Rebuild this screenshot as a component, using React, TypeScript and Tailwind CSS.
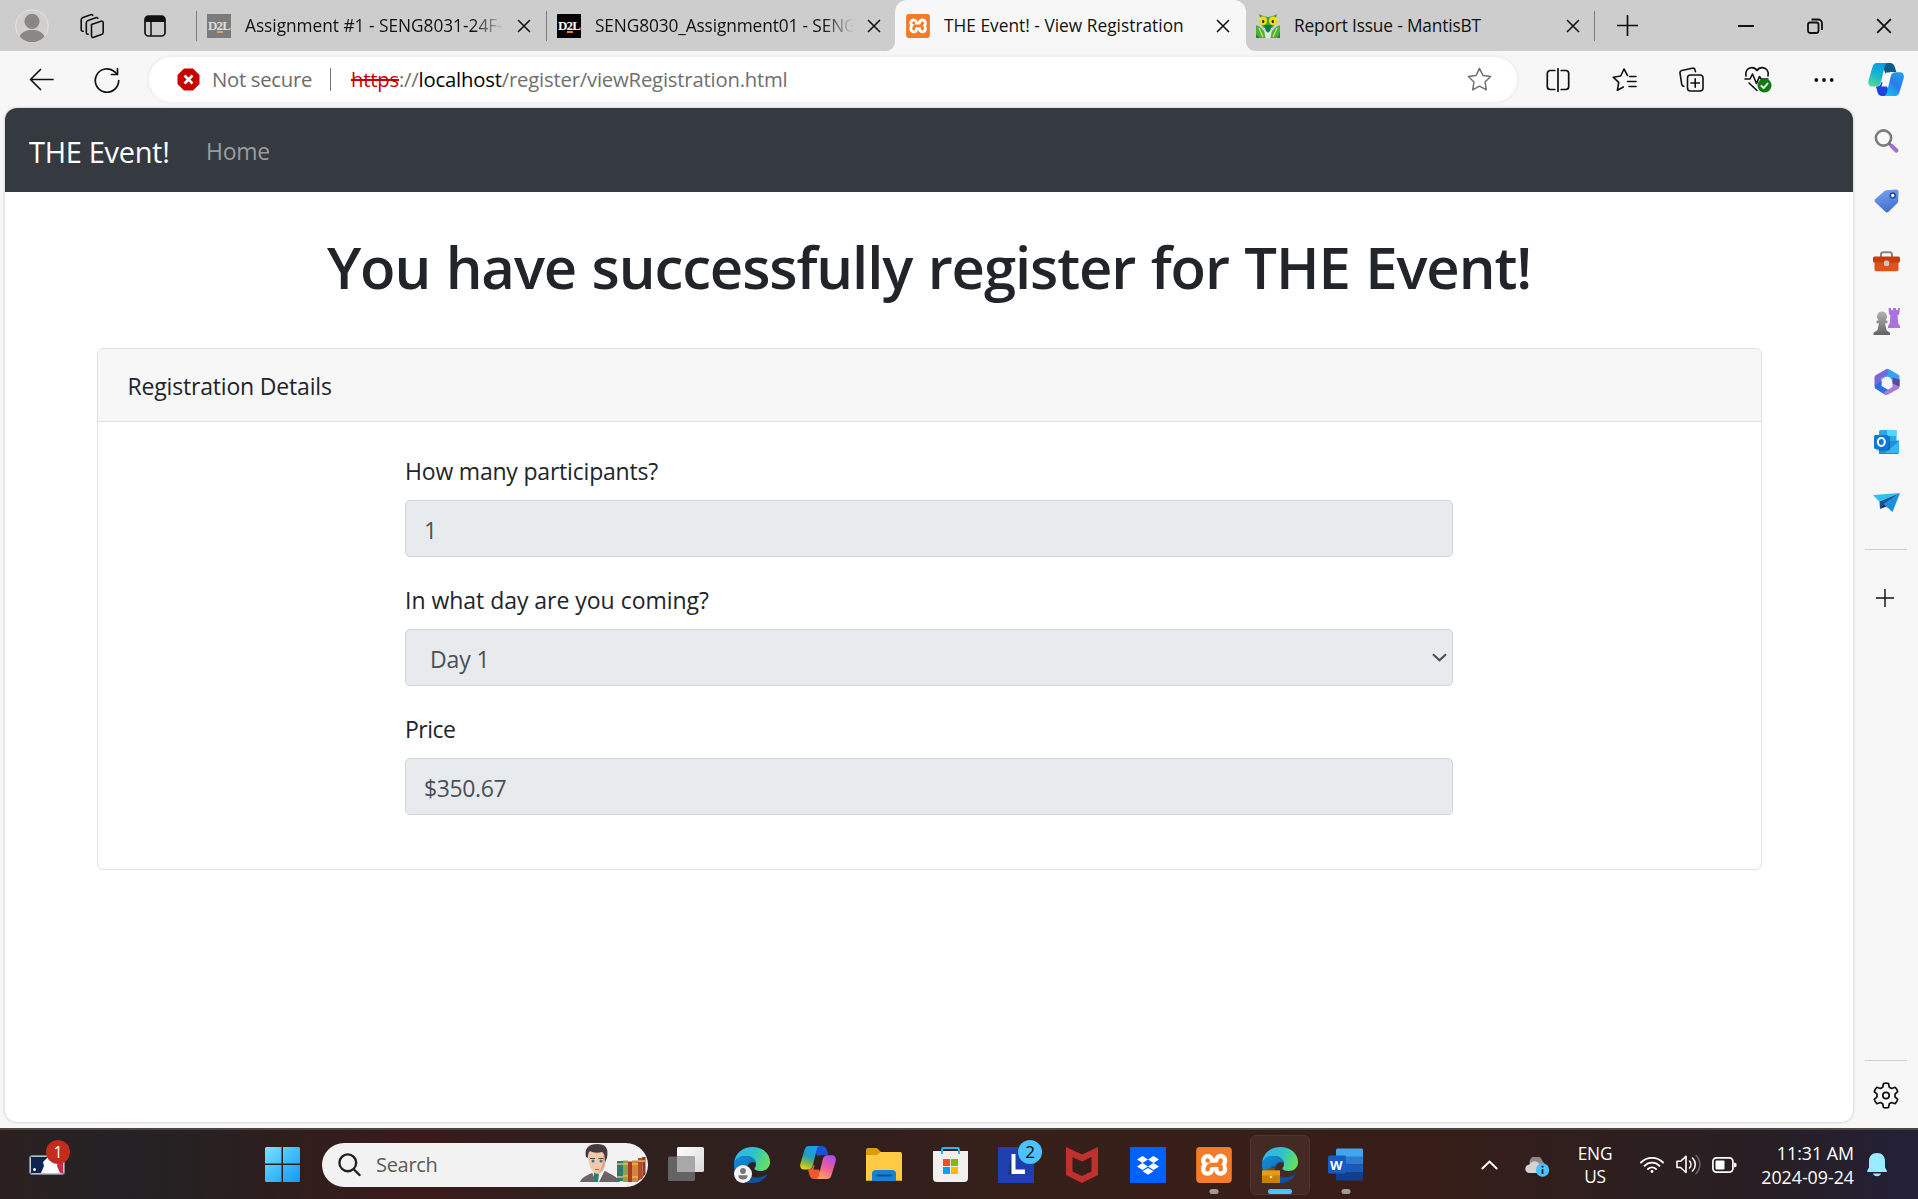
import React from 'react';
import { SiXampp } from 'react-icons/si';

type Kids = { children?: React.ReactNode; className?: string };

/* ---------- small shared glyphs ---------- */

function Cross({ size = 14 }: { size?: number }) {
  return (
    <svg width={size} height={size} viewBox="0 0 14 14" fill="none" stroke="#111" strokeWidth="1.6">
      <path d="M1 1l12 12M13 1L1 13" />
    </svg>
  );
}

function PlusGlyph({ size }: { size: number }) {
  return (
    <svg width={size} height={size} viewBox="0 0 20 20" fill="none" stroke="#111" strokeWidth="1.6">
      <path d="M10 0v20M0 10h20" />
    </svg>
  );
}

function XamppLogo({ size }: { size: number }) {
  return (
    <span className="relative flex shrink-0 items-center justify-center">
      <span className="absolute inset-[3px] bg-white" />
      <SiXampp size={size} className="relative text-[#f47b27]" />
    </span>
  );
}

function D2L({ dim }: { dim?: boolean }) {
  return (
    <span
      className={
        dim
          ? 'relative flex size-6 shrink-0 items-center justify-center bg-[#7b7b7b] text-[#dedede]'
          : 'relative flex size-6 shrink-0 items-center justify-center bg-black text-white'
      }
    >
      <span className="font-['Liberation_Serif',serif] text-[13px] leading-none font-bold tracking-[-0.9px]">D2L</span>
      <span className={dim ? 'absolute top-[17px] left-[10px] h-[2px] w-[6px] bg-[#d9a070]' : 'absolute top-[17px] left-[10px] h-[2px] w-[6px] bg-[#f58220]'} />
    </span>
  );
}

function MantisIcon() {
  return (
    <svg width="24" height="24" viewBox="0 0 24 24" className="shrink-0">
      <path d="M3 0l4 2 5 1 5-1 4-2-1 4v5l-4 5H8L4 9V4z" fill="#3fa535" />
      <path d="M8 11h8l-2 6-2 2-2-2z" fill="#127a44" />
      <path d="M0 11l4 2 6 6v5H0z" fill="#4bb034" />
      <path d="M24 11l-4 2-6 6v5h10z" fill="#4bb034" />
      <path d="M3 14l4 9M21 14l-4 9" stroke="#b9e384" strokeWidth="1.400" />
      <path d="M8 16l4 3 4-3-1.500 8h-5z" fill="#dfe8d8" />
      <path d="M0 20l4 4H0zM24 18l-3 6h3z" fill="#168a4c" />
      <ellipse cx="7" cy="6.800" rx="4" ry="4.200" fill="#f2dc16" />
      <ellipse cx="17" cy="6.800" rx="4" ry="4.200" fill="#f2dc16" />
      <ellipse cx="7.200" cy="7.500" rx="1.200" ry="1.800" fill="#3c2a00" />
      <ellipse cx="16.800" cy="7.500" rx="1.200" ry="1.800" fill="#3c2a00" />
    </svg>
  );
}

/* ---------- tab strip ---------- */

function Tab({ icon, title, fade, active, tracking }: { icon: React.ReactNode; title: string; fade?: boolean; active?: boolean; tracking: string }) {
  return (
    <div
      className={
        active
          ? 'relative flex h-full w-[351px] shrink-0 items-center rounded-t-[12px] bg-[#f7f7f7] pl-[11px]'
          : 'relative flex h-full w-[350px] shrink-0 items-center pl-[10px]'
      }
    >
      {active && (
        <>
          <svg width="9" height="9" viewBox="0 0 9 9" className="absolute bottom-0 -left-[9px]">
            <path d="M9 0v9H0a9 9 0 0 0 9-9z" fill="#f7f7f7" />
          </svg>
          <svg width="9" height="9" viewBox="0 0 9 9" className="absolute -right-[9px] bottom-0">
            <path d="M0 0v9h9a9 9 0 0 1-9-9z" fill="#f7f7f7" />
          </svg>
        </>
      )}
      {icon}
      <span
        className={`ml-[14px] min-w-0 flex-1 overflow-hidden text-[17.3px] leading-[26px] whitespace-nowrap text-[#111] ${tracking} ${
          fade ? '[mask-image:linear-gradient(to_right,black_88%,transparent_100%)]' : ''
        }`}
      >
        {title}
      </span>
      <span className="flex w-[43px] justify-center pr-[4px]">
        <Cross />
      </span>
    </div>
  );
}

function TabStrip() {
  return (
    <div className="flex h-[51px] shrink-0 items-center bg-[#cdcdcd]">
      <div className="flex w-[196px] shrink-0 items-center pl-[15px]">
        <svg width="34" height="34" viewBox="0 0 34 34">
          <circle cx="17" cy="17" r="16.4" fill="#d2d0ce" stroke="#e6e4e2" strokeWidth="1" />
          <circle cx="17" cy="12.3" r="7.6" fill="#8a8785" />
          <path d="M4.5 27.5c2.500-5 7-6.500 12.500-6.500s10 1.500 12.500 6.500A16.300 16.300 0 0 1 17 33.300 16.300 16.300 0 0 1 4.500 27.500z" fill="#8a8785" />
        </svg>
        <svg width="26" height="26" viewBox="0 0 26 26" fill="none" stroke="#111" strokeWidth="1.600" strokeLinejoin="round" strokeLinecap="round" className="ml-[30px]">
          <path d="M12.500 11.500l9.500-3.300c1.200-.4 2.200.2 2.200 1.500v9.500c0 1.200-.6 2-1.800 2.400l-7.600 2.700c-1.300.5-2.300-.1-2.300-1.500z" />
          <path d="M9.200 21.200c-1.100.2-1.900-.4-1.900-1.600V9.800c0-1.200.6-2 1.800-2.400l7.700-2.700c.9-.3 1.700-.1 2.100.6" />
          <path d="M4.200 18.200c-1.200.2-2-.4-2-1.600V6.800c0-1.200.6-2 1.800-2.400l7.700-2.700c.9-.3 1.700-.1 2.100.6" />
        </svg>
        <svg width="22" height="22" viewBox="0 0 22 22" className="ml-[39px]">
          <rect x="1" y="1" width="20" height="20" rx="3.500" fill="none" stroke="#111" strokeWidth="1.700" />
          <path d="M1 7V4.500A3.500 3.500 0 0 1 4.500 1h13A3.500 3.500 0 0 1 21 4.500V7z" fill="#111" />
          <path d="M7 7v14" stroke="#111" strokeWidth="1.500" />
        </svg>
      </div>
      <div className="h-[30px] w-[1px] shrink-0 bg-[#7d7d7d]" />
      <Tab icon={<D2L dim />} title="Assignment #1 - SENG8031-24F-" fade tracking="tracking-[-0.02px]" />
      <div className="-ml-[1px] h-[30px] w-[1px] shrink-0 bg-[#7d7d7d]" />
      <Tab icon={<D2L />} title="SENG8030_Assignment01 - SENG" fade tracking="tracking-[-0.12px]" />
      <div className="-ml-[2px] h-full">
        <Tab icon={<XamppLogo size={24} />} title="THE Event! - View Registration" active tracking="tracking-[0.02px]" />
      </div>
      <Tab icon={<MantisIcon />} title="Report Issue - MantisBT" tracking="tracking-[-0.15px]" />
      <div className="-ml-[2px] h-[30px] w-[1px] shrink-0 bg-[#7d7d7d]" />
      <div className="flex flex-1 items-center">
        <span className="ml-[22px]">
          <PlusGlyph size={21} />
        </span>
        <span className="flex-1" />
        <span className="flex w-[68px] justify-center">
          <span className="h-[2px] w-[16px] bg-[#111]" />
        </span>
        <span className="flex w-[70px] justify-center">
          <svg width="16" height="16" viewBox="0 0 16 16" fill="none" stroke="#111" strokeWidth="1.800">
            <rect x="1" y="4.500" width="10.500" height="10.500" rx="2.200" />
            <path d="M4.500 1.500h6.500a4 4 0 0 1 4 4V12" />
          </svg>
        </span>
        <span className="flex w-[68px] justify-center">
          <Cross size={16} />
        </span>
      </div>
    </div>
  );
}

/* ---------- toolbar ---------- */

function ToolSlot({ children, className = '' }: Kids) {
  return <span className={`flex shrink-0 items-center justify-center ${className}`}>{children}</span>;
}

function Toolbar() {
  return (
    <div className="flex h-[57px] shrink-0 items-center bg-[#f7f7f7]">
      <ToolSlot className="w-[82px]">
        <svg width="25" height="23" viewBox="0 0 25 23" fill="none" stroke="#111" strokeWidth="1.700" strokeLinecap="round" strokeLinejoin="round">
          <path d="M24 11.500H1.500M11.500 1.500l-10 10 10 10" />
        </svg>
      </ToolSlot>
      <ToolSlot className="w-[50px]">
        <svg width="26" height="26" viewBox="0 0 26 26" fill="none" stroke="#111" strokeWidth="1.700" strokeLinecap="round" strokeLinejoin="round">
          <path d="M24.700 13.500A11.700 11.700 0 1 1 20.800 4.800L23 7" />
          <path d="M23.500 1.500v6h-6" />
        </svg>
      </ToolSlot>
      <div className="ml-[17px] flex h-[45px] w-[1368px] shrink-0 items-center rounded-full bg-white pl-[28px] shadow-[0_0_4px_rgba(0,0,0,0.08)]">
        <svg width="23" height="23" viewBox="0 0 23 23">
          <path d="M7 .5h9L22.500 7v9L16 22.500H7L.5 16V7z" fill="#c80000" />
          <path d="M7.500 7.500l8 8M15.500 7.500l-8 8" stroke="#fff" strokeWidth="2.600" />
        </svg>
        <span className="ml-[12px] w-[105px] text-[20.3px] tracking-[-0.28px] whitespace-nowrap text-[#6b6b6b]">Not secure</span>
        <span className="ml-[13px] h-[23px] w-[1px] bg-[#767676]" />
        <span className="ml-[20px] flex-1 text-[20.3px] tracking-[-0.2px] whitespace-nowrap text-[#6f6f6f]">
          <span className="text-[#c80000] line-through decoration-2">https</span>://<span className="text-black">localhost</span>/register/viewRegistration.html
        </span>
        <svg width="25" height="25" viewBox="0 0 24 24" fill="none" stroke="#6f6f6f" strokeWidth="1.400" strokeLinejoin="round" className="mr-[25px]">
          <path d="M12 1.300l3.300 6.800 7.400 1.100-5.400 5.200 1.300 7.500L12 18.400l-6.600 3.500 1.300-7.500L1.300 9.200l7.400-1.100z" />
        </svg>
      </div>
      <ToolSlot className="ml-[8px] w-[66px]">
        <svg width="24" height="24" viewBox="0 0 24 24" fill="none" stroke="#111" strokeWidth="1.700" strokeLinecap="round">
          <path d="M12 .8v22.400M8.800 2.500H4.300a3 3 0 0 0-3 3v13a3 3 0 0 0 3 3h4.500M15.200 2.500h4.500a3 3 0 0 1 3 3v13a3 3 0 0 1-3 3h-4.500" />
        </svg>
      </ToolSlot>
      <ToolSlot className="w-[67px]">
        <svg width="25" height="24" viewBox="0 0 25 24" fill="none" stroke="#111" strokeWidth="1.600" strokeLinecap="round" strokeLinejoin="round">
          <path d="M15.500 7.500L12 1 8.700 8 1.200 9.200l5.500 5.200-1.300 7.900 6-3.300M17.500 8.500h6.500M15.500 13.500h8.500M17 18.500h7" />
        </svg>
      </ToolSlot>
      <ToolSlot className="w-[66px]">
        <svg width="25" height="25" viewBox="0 0 25 25" fill="none" stroke="#111" strokeWidth="1.600" strokeLinecap="round" strokeLinejoin="round">
          <rect x="8.500" y="8" width="15.500" height="16" rx="3" />
          <path d="M16.200 11.800v8.400M12 16h8.400M5 19.200c-1.300 0-2-.8-2.300-2L1 6.200C.8 4.800 1.500 3.800 2.800 3.500l10.500-2.300c1.400-.3 2.500.4 2.700 1.700l.4 1.800" />
        </svg>
      </ToolSlot>
      <ToolSlot className="w-[67px]">
        <svg width="28" height="27" viewBox="0 0 28 27" fill="none" stroke="#111" strokeWidth="1.600" strokeLinecap="round" strokeLinejoin="round">
          <path d="M2 10C1 6 3 2 7.500 1.600c2.500-.1 4.300 1 5.500 2.900 1.200-1.900 3-3 5.500-2.900C23 2 25 6 24 10M1 13h5l2.500-5 4 9.500 3-7L17 13h7M5 17l8 7.500" />
          <circle cx="20.500" cy="19.500" r="7" fill="#107c10" stroke="none" />
          <path d="M17.300 19.800l2.300 2.300 4-4.600" stroke="#fff" strokeWidth="1.800" />
        </svg>
      </ToolSlot>
      <ToolSlot className="w-[65px]">
        <svg width="20" height="6" viewBox="0 0 20 6" fill="#111">
          <circle cx="2.300" cy="3" r="1.900" />
          <circle cx="10" cy="3" r="1.900" />
          <circle cx="17.700" cy="3" r="1.900" />
        </svg>
      </ToolSlot>
      <ToolSlot className="w-[60px]">
        <CopilotBlue />
      </ToolSlot>
    </div>
  );
}

function CopilotBlue() {
  return (
    <svg width="36" height="33" viewBox="0 0 36 33">
      <defs>
        <linearGradient id="cb1" x1="0.6" y1="0" x2="0.2" y2="1">
          <stop offset="0" stopColor="#0d9ce4" />
          <stop offset="0.5" stopColor="#17b5d0" />
          <stop offset="1" stopColor="#54dd8c" />
        </linearGradient>
        <linearGradient id="cb2" x1="0.9" y1="0" x2="0.2" y2="1">
          <stop offset="0" stopColor="#1fa2f0" />
          <stop offset="0.5" stopColor="#2b7bea" />
          <stop offset="1" stopColor="#17c3f8" />
        </linearGradient>
      </defs>
      <path d="M13 0h9c3 0 4 1.500 5 4.500L28.300 9H24c-3 0-4.500 2-5.200 4.500z" fill="#0a5c8c" />
      <path d="M23 33h-8.500c-3 0-4.300-1.500-5.200-4.500L8 23.500c3.500 0 4.600-1.500 5.500-4.500l4 1z" fill="#1a44dd" />
      <path d="M9 0h11c-2 0-3 2-3.500 4L13 19c-.8 3-2.500 4.500-5.500 4.500H4C.5 23.500-.5 20.500.6 17L4.500 4C5.300 1.500 6.500 0 9 0z" fill="url(#cb1)" />
      <path d="M27 33H15.500c2 0 3-2 3.500-4l3.700-15.500C23.400 10.500 25 9.200 28 9.200h4c3.600 0 4.500 3.300 3.500 6.800L31.500 29c-.8 2.500-2 4-4.500 4z" fill="url(#cb2)" />
      <path d="M18.200 9.500h5.500l-1.500 3.500-3.200 10.500h-5.500L15 18z" fill="#f7f7f7" />
    </svg>
  );
}

/* ---------- web page ---------- */

function Field({ label, value, tracking, labelTracking, select }: { label: string; value: string; tracking: string; labelTracking: string; select?: boolean }) {
  return (
    <div className="mb-6">
      <div className={`h-9 pt-[1px] text-[23px] leading-9 text-[#212529] ${labelTracking}`}>{label}</div>
      <div
        className={`mt-3 flex h-[57px] items-center justify-between rounded-[5px] border border-[#ced4da] bg-[#e8ebee] pt-[3px] pr-[5px] text-[23px] text-[#495057] ${
          select ? 'pl-[24px]' : 'pl-[18px]'
        }`}
      >
        <span className={tracking}>{value}</span>
        {select && (
          <svg width="15" height="9" viewBox="0 0 15 9" fill="none" stroke="#495057" strokeWidth="2.200" className="mb-[3px]">
            <path d="M1 1.200l6.500 6 6.500-6" />
          </svg>
        )}
      </div>
    </div>
  );
}

function WebPage() {
  return (
    <div className="mb-[6px] ml-[5px] flex w-[1848px] flex-col overflow-hidden rounded-[12px] bg-white shadow-[0_0_3px_rgba(0,0,0,0.25)]">
      <div className="flex h-[84px] shrink-0 items-center bg-[#343a40] pt-[3px] pl-[24px]">
        <span className="w-[177px] text-[29px] tracking-[-0.32px] text-white">THE Event!</span>
        <span className="text-[23px] tracking-[-0.3px] text-[#999c9f]">Home</span>
      </div>
      <h1 className="mt-[39px] text-center text-[58px] leading-[72px] font-semibold tracking-[-1.1px] text-[#212529] [word-spacing:1.5px]">You have successfully register for THE Event!</h1>
      <div className="mx-auto mt-[45px] h-[522px] w-[1665px] rounded-[6px] border border-[#dfdfdf]">
        <div className="flex h-[73px] items-center rounded-t-[5px] border-b border-[#dfdfdf] bg-[#f7f7f7] pt-[3px] pl-[30px] text-[23px] tracking-[-0.18px] text-[#212529]">
          Registration Details
        </div>
        <div className="mx-auto w-[1048px] pt-[30px]">
          <Field label="How many participants?" value="1" labelTracking="tracking-[-0.2px]" tracking="" />
          <Field label="In what day are you coming?" value="Day 1" labelTracking="tracking-[-0.03px]" tracking="tracking-[-0.1px]" select />
          <Field label="Price" value="$350.67" labelTracking="tracking-[-0.5px]" tracking="tracking-[-0.4px]" />
        </div>
      </div>
    </div>
  );
}

/* ---------- Edge sidebar ---------- */

function Slot({ children }: Kids) {
  return <div className="flex h-[60.2px] items-center justify-center pl-[2px]">{children}</div>;
}

function Sidebar() {
  return (
    <div className="flex w-[65px] flex-col items-center">
      <div className="mt-[3px]">
        <Slot>
          <svg width="25" height="24" viewBox="0 0 25 24" fill="none">
            <circle cx="9.500" cy="9" r="7.600" stroke="#7b7b7b" strokeWidth="2.600" fill="#fafafa" />
            <path d="M15 14.500l3 3" stroke="#6a6a6a" strokeWidth="2.500" />
            <path d="M17.800 17l4.500 4.500" stroke="#a070d2" strokeWidth="4.200" strokeLinecap="round" />
          </svg>
        </Slot>
        <Slot>
          <svg width="25" height="24" viewBox="0 0 25 24">
            <defs>
              <linearGradient id="tag" x1="0" y1="0" x2="0.3" y2="1">
                <stop stopColor="#7aa5f4" />
                <stop offset="1" stopColor="#4571d3" />
              </linearGradient>
            </defs>
            <path d="M12.500 1.200L22 .5c1.500-.1 2.500.8 2.500 2.200l-.3 9.500c0 .8-.3 1.400-.9 2l-8.500 8.300c-1.200 1.200-2.500 1.200-3.700 0L1.300 13.300c-1-1-1-2.200 0-3.200l9.200-8c.6-.5 1.200-.8 2-.9z" fill="url(#tag)" />
            <circle cx="18.700" cy="6.500" r="2.400" fill="#fff" stroke="#24469b" strokeWidth="1.500" />
          </svg>
        </Slot>
        <Slot>
          <svg width="27" height="21" viewBox="0 0 27 21">
            <path d="M8 6V3.500C8 2 9 1.200 10.500 1.200h6C18 1.200 19 2 19 3.500V6" fill="none" stroke="#868686" strokeWidth="2" />
            <path d="M1.500 9h24v9.500c0 1-.7 1.700-1.700 1.700H3.200c-1 0-1.700-.7-1.700-1.700z" fill="#e0521c" />
            <rect x="0" y="5.500" width="27" height="6" rx="1.500" fill="#c83c0c" />
            <rect x="11" y="9.500" width="5" height="5.500" rx="1.500" fill="#c9c9c9" />
          </svg>
        </Slot>
        <Slot>
          <svg width="27" height="28" viewBox="0 0 27 28">
            <defs>
              <linearGradient id="pawn" x1="0" y1="0" x2="0" y2="1">
                <stop stopColor="#b4b4b4" />
                <stop offset="1" stopColor="#636363" />
              </linearGradient>
            </defs>
            <path d="M15.500 0h2.500v2h2V0h3v2h2V0H27l-.7 6-1.800 1.500.7 8L27 18v2H15v-2l1.700-2.500.7-8L16 6z" fill="#a873dc" />
            <path d="M9 3.500a5 5 0 0 1 3.300 8.700l2.200.5v2.500h-2.500l1.500 7 3.500 2.500v2.300H.5v-2.300L4.500 22 6 15.200H3.500v-2.500l2.200-.5A5 5 0 0 1 9 3.500z" fill="url(#pawn)" />
          </svg>
        </Slot>
        <Slot>
          <svg width="26" height="27" viewBox="0 0 26 27">
            <path d="M12 1.200a3 3 0 0 1 3 0l9 5.200c1 .6 1.500 1.500 1.500 2.600v8l-7-4.500-6-3.500-5 3z" fill="#32a4f2" />
            <path d="M12.500 1L2 7C1 7.600.5 8.500.5 9.500v9c0 1 .5 1.800 1.400 2.400L7.500 17V10l7-4c0-3-1-4.500-2-5z" fill="#7b66d7" />
            <path d="M.8 17.500l6.700-4.500v5l7 4 4 1-5.500 3.500a2.500 2.500 0 0 1-2.300 0L2 21z" fill="#2a6fda" />
            <path d="M25.500 11v7.500c0 1-.5 2-1.400 2.500L14 26.500c-2 .8-4-.5-4-2.500l8.500-5v-8z" fill="#a67bd9" />
            <path d="M18.500 9.500l7 2v7l-7-3z" fill="#5a4a9c" />
            <circle cx="13" cy="13.500" r="4.800" fill="#f7f7f7" />
          </svg>
        </Slot>
        <Slot>
          <svg width="25" height="24" viewBox="0 0 25 24">
            <path d="M7 0h15.500v13H5V2c0-1.200.8-2 2-2z" fill="#28a8ea" />
            <path d="M13 0h9.500v6H13z" fill="#50d9ff" />
            <path d="M5 12l20-1.500V22c0 1.200-.8 2-2 2H5z" fill="#1490df" />
            <path d="M25 11L11 23h12c1.200 0 2-.8 2-2z" fill="#35b8f1" />
            <rect x="2" y="6" width="14" height="14.500" rx="1.500" fill="#0a4a80" opacity="0.500" />
            <rect x="0" y="5" width="14.500" height="14" rx="1.500" fill="#0f78d4" />
            <ellipse cx="7.300" cy="12" rx="3.500" ry="3.900" fill="none" stroke="#fff" strokeWidth="2" />
          </svg>
        </Slot>
        <Slot>
          <svg width="27" height="19" viewBox="0 0 27 19">
            <path d="M0 2L27 0 6 8.500z" fill="#2fc1ee" />
            <path d="M27 0L6.500 8.500 7 16l3-4z" fill="#0f4f9e" />
            <path d="M27 0L10.500 11l9 8z" fill="#1b8fdd" />
            <path d="M7 16l3.500-5 3 2.500z" fill="#0a2f66" />
          </svg>
        </Slot>
      </div>
      <div className="mt-[17px] h-[1px] w-[42px] bg-[#cfcfcf]" />
      <div className="mt-[39px] pr-[1px]">
        <PlusGlyph size={18} />
      </div>
      <div className="flex-1" />
      <div className="h-[1px] w-[42px] bg-[#cfcfcf]" />
      <svg width="26" height="27" viewBox="0 0 26 27" fill="none" stroke="#111" strokeWidth="1.700" strokeLinejoin="round" className="mt-[21px] mb-[19px]">
        <path d="M10.500 1.500Q13 .7 15.500 1.500L16.300 5.200 18.600 6.500 22.200 5.300Q24 7 24.700 9.600L22 12.200V14.800L24.700 17.400Q24 20 22.200 21.700L18.600 20.500 16.300 21.800 15.500 25.500Q13 26.300 10.500 25.500L9.700 21.800 7.400 20.500 3.800 21.700Q2 20 1.300 17.400L4 14.800V12.200L1.300 9.600Q2 7 3.800 5.300L7.400 6.500 9.700 5.200z" />
        <circle cx="13" cy="13.500" r="3.200" />
      </svg>
    </div>
  );
}

/* ---------- Windows taskbar ---------- */

function App66({ children, className = '' }: Kids) {
  return <div className={`relative flex h-[60px] w-[66px] shrink-0 items-center justify-center ${className}`}>{children}</div>;
}

function EdgeLogo({ id }: { id: string }) {
  return (
    <svg width="36" height="36" viewBox="0 0 36 36">
      <defs>
        <linearGradient id={`${id}a`} x1="0" y1="0.3" x2="1" y2="0.6">
          <stop stopColor="#35b6f0" />
          <stop offset="0.5" stopColor="#2dc4c8" />
          <stop offset="1" stopColor="#6ae25a" />
        </linearGradient>
        <linearGradient id={`${id}b`} x1="0" y1="0" x2="0.5" y2="1">
          <stop stopColor="#1690dc" />
          <stop offset="1" stopColor="#0a62b4" />
        </linearGradient>
      </defs>
      <path d="M0 16C1 6 9 0 18.500 0 29 0 36 7 36 15c0 6-4.500 9-9.500 9-4 0-6-1.200-6-2.500 0-1 1.500-1.500 1.500-4.500C22 12 17 9 12 9 6 9 1.500 12 0 16z" fill={`url(#${id}a)`} />
      <path d="M0 16.500C1 11.500 6 8.800 11.500 8.800c6 0 10.500 3.700 10.500 8.200 0-2.500-6.500-3.500-8.500 2-2.500 7 4 15 12 14.500-2.500 1.700-5.500 2.500-8.500 2.400C7 35.500-1 27 0 16.500z" fill={`url(#${id}b)`} />
      <path d="M13 19c-2 6 2.500 11.500 9 11.500 5 0 8.500-2 10.300-3 .6-.4 1 .1.700.7C30 33 24.500 36 19 36c-7.500 0-12-6-11-12.500.5-3 2.500-5 5-4.500z" fill="#124f9c" />
    </svg>
  );
}

function Indicator() {
  return <span className="absolute bottom-[1px] left-1/2 h-[5px] w-[9px] -translate-x-1/2 rounded-full bg-[#a39a97]" />;
}

function SearchPerson() {
  return (
    <svg width="68" height="42" viewBox="0 0 68 42" className="shrink-0">
      <path d="M0 38c2-5 6-6 12-9l4-4 9 2c5 3 12 5 15 11z" fill="#6b6364" />
      <path d="M11 26l5 12h3l6-12z" fill="#e9f0ee" />
      <path d="M14 29l3-2 2 3-1 8h-4z" fill="#2a7d75" />
      <path d="M8 10c0-4 4-7 9-7s9 3 9 8c0 8-1 18-8 19-6 0-10-9-10-20z" fill="#f1c9ab" />
      <path d="M18 29c6-1 8-10 8-18l-3 1c0 7-1 13-5 17z" fill="#dca888" />
      <path d="M6 13C4 4 9 0 17 0c8 0 12 3 10 14l-2 4c0-4 0-8-3-10-4 1-9 1-12-1-2 2-2 4-2 7z" fill="#463a3f" />
      <path d="M10 14.500h5M18.500 14.500h5" stroke="#5b4438" strokeWidth="1.200" />
      <circle cx="13" cy="17" r="1.500" fill="#3f7396" />
      <circle cx="21" cy="17" r="1.500" fill="#3f7396" />
      <path d="M15 25.500h4" stroke="#b8685e" strokeWidth="1.200" />
      <path d="M37 17h6v20h-6z" fill="#2c7a74" />
      <path d="M43 16.500h5V38h-5z" fill="#8da24a" />
      <path d="M48 17.500h4V38h-4z" fill="#a83a28" />
      <path d="M52 16.500h6V38h-6z" fill="#d1853b" />
      <path d="M58 14h4l1 20-5 3z" fill="#b64a31" />
      <path d="M62 13h3.500v17L63 33z" fill="#93382c" />
      <path d="M37 20h6M37 33h6M43 20h5M43 32h5M52 20h6M52 33h6M58 17h7" stroke="#e8c04b" strokeWidth="1.400" />
    </svg>
  );
}

function Taskbar() {
  return (
    <div className="flex h-[71px] shrink-0 items-center border-t-2 border-[#4b4544] bg-[linear-gradient(90deg,#2c201f_0,#242225_110px,#262123_180px,#2f1e1d_290px,#3b1a1b_420px,#2f201e_560px,#2f1f1e_820px,#37201a_1000px,#381d17_1400px,#2d1f1f_1620px,#281f24_1760px,#232038_1918px)] text-white">
      <div className="relative ml-[29px] flex w-[220px] shrink-0 items-center">
        <svg width="36" height="20" viewBox="0 0 36 20">
          <rect x="0.700" y="0.700" width="34.600" height="18.600" rx="2.500" fill="#fff" stroke="#7b8494" strokeWidth="1.400" />
          <path d="M2 2h17l-5 5 1 4-3 7H2z" fill="#0d2450" />
          <path d="M22 2h12v16h-3l-3-7 1-5z" fill="#d0284a" />
          <circle cx="5.500" cy="14.500" r="1.500" fill="#fff" />
        </svg>
        <span className="absolute -top-[15px] left-[17px] flex size-[24px] items-center justify-center rounded-full bg-[#c42b1c] text-[16px] leading-none">1</span>
      </div>
      <App66>
        <svg width="35" height="35" viewBox="0 0 35 35">
          <defs>
            <linearGradient id="win" x1="0" y1="0" x2="1" y2="1" gradientUnits="objectBoundingBox">
              <stop stopColor="#84e0fd" />
              <stop offset="0.500" stopColor="#40bdfb" />
              <stop offset="1" stopColor="#1597f4" />
            </linearGradient>
          </defs>
          <path d="M0 1.500A1.500 1.500 0 0 1 1.500 0h15v16.500H0zM18 0h15.500A1.500 1.500 0 0 1 35 1.500v15H18zM0 18h16.500v17h-15A1.500 1.500 0 0 1 0 33.500zM18 18h17v15.500a1.500 1.500 0 0 1-1.500 1.500H18z" fill="url(#win)" />
        </svg>
      </App66>
      <div className="ml-[7px] flex h-[44px] w-[326px] shrink-0 items-center overflow-hidden rounded-full bg-[#f3f2f2] pl-[16px]">
        <svg width="23" height="24" viewBox="0 0 23 24" fill="none" stroke="#222" strokeWidth="2.400" strokeLinecap="round">
          <circle cx="9.800" cy="9.800" r="8.400" />
          <path d="M16 16.500l5.500 5.500" />
        </svg>
        <span className="ml-[15px] flex-1 pt-[1px] text-[20px] tracking-[-0.3px] text-[#5b5b5b]">Search</span>
        <SearchPerson />
      </div>
      <div className="ml-[5px] flex items-center">
        <App66>
          <svg width="36" height="35" viewBox="0 0 36 35">
            <defs>
              <linearGradient id="tv" x1="0" y1="0" x2="1" y2="1">
                <stop stopColor="#fff" />
                <stop offset="1" stopColor="#d8d8d8" />
              </linearGradient>
            </defs>
            <rect x="9" y="0" width="27" height="25" rx="1.500" fill="url(#tv)" />
            <rect x="0" y="9.500" width="27" height="24.500" rx="1.500" fill="#636363" />
            <path d="M9 9.500h18V25H9z" fill="#a8a8a8" />
          </svg>
        </App66>
        <App66>
          <EdgeLogo id="e1" />
          <svg width="18" height="18" viewBox="0 0 18 18" className="absolute top-[30px] left-[15px]">
            <circle cx="9" cy="9" r="9" fill="#f5f5f5" />
            <circle cx="9" cy="6" r="2.900" fill="#757575" />
            <path d="M4.300 10.300h9.400c0 3-2 4.300-4.700 4.300s-4.700-1.300-4.700-4.300z" fill="#757575" />
          </svg>
        </App66>
        <App66 className="pb-[6px]">
          <svg width="36" height="33" viewBox="0 0 36 33" className="mt-[2px]">
            <defs>
              <linearGradient id="cc1" x1="0.600" y1="0" x2="0.300" y2="1">
                <stop offset="0" stopColor="#18a0ea" />
                <stop offset="0.450" stopColor="#1f9fc0" />
                <stop offset="0.700" stopColor="#6fb450" />
                <stop offset="1" stopColor="#f0cf10" />
              </linearGradient>
              <linearGradient id="cc2" x1="0.700" y1="0" x2="0.300" y2="1">
                <stop offset="0" stopColor="#a74ff0" />
                <stop offset="0.500" stopColor="#ef5b98" />
                <stop offset="1" stopColor="#ffa45e" />
              </linearGradient>
            </defs>
            <path d="M13 0h9c3 0 4 1.500 5 4.500L28.300 9H24c-3 0-4.500 2-5.200 4.500z" fill="#1c52d2" />
            <path d="M23 33h-8.500c-3 0-4.300-1.500-5.200-4.500L8 23.500c3.500 0 4.600-1.500 5.500-4.500l4 1z" fill="#f2562f" />
            <path d="M9 0h11c-2 0-3 2-3.500 4L13 19c-.8 3-2.500 4.500-5.500 4.500H4C.5 23.500-.5 20.500.6 17L4.500 4C5.300 1.500 6.500 0 9 0z" fill="url(#cc1)" />
            <path d="M27 33H15.500c2 0 3-2 3.500-4l3.700-15.500C23.400 10.500 25 9.200 28 9.200h4c3.600 0 4.500 3.300 3.500 6.800L31.500 29c-.8 2.500-2 4-4.500 4z" fill="url(#cc2)" />
            <path d="M18.200 9.500h5.500l-1.500 3.500-3.200 10.500h-5.500L15 18z" fill="#2f1f1e" />
          </svg>
        </App66>
        <App66>
          <svg width="36" height="33" viewBox="0 0 36 33">
            <path d="M0 2a2 2 0 0 1 2-2h9l4 4v5H0z" fill="#dd9a0a" />
            <path d="M0 7h9.500c1.500 0 2.300-.4 3.200-1.300L14.500 4H34a2 2 0 0 1 2 2v27H0z" fill="#ffcb45" />
            <path d="M0 32h36v1H0z" fill="#d89a1a" />
            <path d="M6 33v-7a4 4 0 0 1 4-4h16a4 4 0 0 1 4 4v7z" fill="#1682d4" />
            <path d="M11 27.500h14" stroke="#0b4f93" strokeWidth="1.800" strokeLinecap="round" />
          </svg>
        </App66>
        <App66>
          <svg width="35" height="35" viewBox="0 0 35 35">
            <path d="M0 4h35v27a4 4 0 0 1-4 4H4a4 4 0 0 1-4-4z" fill="#f1f0ef" />
            <path d="M9 7V2.500C9 1.500 9.700 1 10.500 1h14c.8 0 1.500.5 1.500 1.500V7" fill="none" stroke="#2cb6ea" strokeWidth="2" />
            <path d="M10 12h7v7h-7z" fill="#f25022" />
            <path d="M18 12h7v7h-7z" fill="#7fba00" />
            <path d="M10 20h7v7h-7z" fill="#00a4ef" />
            <path d="M18 20h7v7h-7z" fill="#ffb900" />
          </svg>
        </App66>
        <App66>
          <svg width="36" height="36" viewBox="0 0 36 36">
            <path d="M0 0h36v36H0z" fill="#1f3fb0" />
            <path d="M13.500 7L10.500 28l3-1z" fill="#0b3b50" />
            <path d="M13.500 7h4v15.500H27V27H13.500z" fill="#fff" />
          </svg>
          <span className="absolute top-[5px] left-[35px] flex size-[24px] items-center justify-center rounded-full bg-[#4cc2ff] text-[17px] text-black">2</span>
        </App66>
        <App66>
          <svg width="32" height="36" viewBox="0 0 32 36">
            <path d="M0 0l16 7.500L32 0v28l-16 8L0 28zM6.500 10v14.500L16 29l9.500-4.500V10L16 14.500z" fill="#c0302c" fillRule="evenodd" />
          </svg>
        </App66>
        <App66>
          <svg width="36" height="36" viewBox="0 0 36 36">
            <path d="M0 0h36v36H0z" fill="#0061fe" />
            <path d="M12.500 9l5.500 3.500-5.500 3.500L7 12.500zM23.500 9l5.500 3.500-5.500 3.500-5.500-3.500zM12.500 16l5.500 3.500-5.500 3.500L7 19.500zM23.500 16l5.500 3.500-5.500 3.500-5.500-3.500zM18 21l5.500 3.300L18 27.800l-5.500-3.500z" fill="#fff" />
          </svg>
        </App66>
        <App66>
          <XamppLogo size={36} />
          <Indicator />
        </App66>
        <App66>
          <span className="absolute inset-x-[3px] inset-y-0 rounded-[6px] border border-[#51352f] bg-[#432a25]" />
          <span className="relative">
            <EdgeLogo id="e2" />
          </span>
          <svg width="18" height="15" viewBox="0 0 18 15" className="absolute top-[33px] left-[15px]">
            <path d="M6 3V1h6v2" fill="none" stroke="#8a4d05" strokeWidth="1.500" />
            <path d="M0 2.500h18V15H0z" fill="#c98009" />
            <path d="M0 2.500h18v5H0z" fill="#e79c12" />
            <circle cx="9" cy="9" r="1.300" fill="#ffe27a" />
          </svg>
          <span className="absolute bottom-[1px] left-[21px] h-[5px] w-[24px] rounded-full bg-[#4cc2ff]" />
        </App66>
        <App66>
          <svg width="36" height="33" viewBox="0 0 36 33">
            <path d="M8 2a1.500 1.500 0 0 1 1.500-1.500h24A1.500 1.500 0 0 1 35 2v7H8z" fill="#41a5ee" />
            <path d="M8 8.500h27v8H8z" fill="#2b7cd3" />
            <path d="M8 16.500h27v8H8z" fill="#185abd" />
            <path d="M8 24.500h27V31a1.500 1.500 0 0 1-1.500 1.500h-24A1.500 1.500 0 0 1 8 31z" fill="#103f91" />
            <rect x="0" y="7.500" width="18" height="18" rx="1.500" fill="#185abd" />
          </svg>
          <span className="absolute top-[19px] left-[17px] text-[13px] leading-[22px] font-bold">W</span>
          <Indicator />
        </App66>
      </div>
      <div className="ml-[102px] flex h-full items-center">
        <svg width="17" height="10" viewBox="0 0 17 10" fill="none" stroke="#fff" strokeWidth="1.900">
          <path d="M.8 9l7.700-7.500L16.200 9" />
        </svg>
        <svg width="26" height="20" viewBox="0 0 26 20" className="ml-[27px] mt-[4px]">
          <path d="M5 8a6.500 6.500 0 0 1 12-5l3 5z" fill="#8f8a8a" />
          <path d="M4 16C-1 15-1 8 4.500 7.500 7 3 13 3.500 15 8l4 8z" fill="#d6d3d3" />
          <circle cx="17.500" cy="13" r="6.700" fill="#4cc2ff" />
          <path d="M17.500 12v5" stroke="#10202c" strokeWidth="1.800" />
          <circle cx="17.500" cy="9.700" r="1.100" fill="#10202c" />
        </svg>
        <div className="ml-[26px] w-[36px] text-center text-[17.3px] leading-[23px] tracking-[-0.2px]">
          <div>ENG</div>
          <div>US</div>
        </div>
        <svg width="24" height="18" viewBox="0 0 24 18" fill="none" stroke="#fff" strokeWidth="1.800" strokeLinecap="round" className="ml-[27px]">
          <path d="M1 6.500a15.500 15.500 0 0 1 22 0M4.500 9.800a10.600 10.600 0 0 1 15 0M8 13a5.700 5.700 0 0 1 8 0" />
          <circle cx="12" cy="15.500" r="1.400" fill="#fff" stroke="none" />
        </svg>
        <svg width="25" height="21" viewBox="0 0 25 21" fill="none" stroke="#fff" strokeWidth="1.600" strokeLinecap="round" strokeLinejoin="round" className="ml-[12px]">
          <path d="M1 7.300v6.200h3.500l5.500 5V2.300l-5.500 5zM13.500 7a5 5 0 0 1 0 7M16.500 4a9 9 0 0 1 0 13" />
          <path d="M20 1.500a12.500 12.500 0 0 1 0 18" stroke="#6d6468" />
        </svg>
        <svg width="25" height="16" viewBox="0 0 25 16" className="ml-[11px]">
          <rect x="0.900" y="0.900" width="20" height="14.200" rx="3.500" fill="none" stroke="#fff" strokeWidth="1.700" />
          <rect x="3.500" y="3.500" width="9" height="9" rx="1" fill="#fff" />
          <path d="M22 5.500l2.500 1v3l-2.500 1z" fill="#fff" />
        </svg>
        <div className="ml-[19px] w-[98px] text-right text-[17.8px] leading-[24px] whitespace-nowrap">
          <div>11:31 AM</div>
          <div>2024-09-24</div>
        </div>
        <svg width="20" height="24" viewBox="0 0 20 24" fill="#99ebff" className="ml-[13px]">
          <path d="M10 0c5 0 8 3.500 8 8v6.500l1.800 3.200c.3.700 0 1.300-.8 1.300H1c-.8 0-1.100-.6-.8-1.300L2 14.500V8c0-4.500 3-8 8-8zM6 20.500h8c-.5 1.800-2 2.700-4 2.700s-3.500-.9-4-2.700z" />
        </svg>
      </div>
    </div>
  );
}

export default function App() {
  return (
    <div className="flex h-[1199px] w-[1918px] flex-col overflow-hidden bg-[#f7f7f7] font-['Open_Sans','Noto_Sans',sans-serif]">
      <TabStrip />
      <Toolbar />
      <div className="flex min-h-0 flex-1">
        <WebPage />
        <Sidebar />
      </div>
      <Taskbar />
    </div>
  );
}
